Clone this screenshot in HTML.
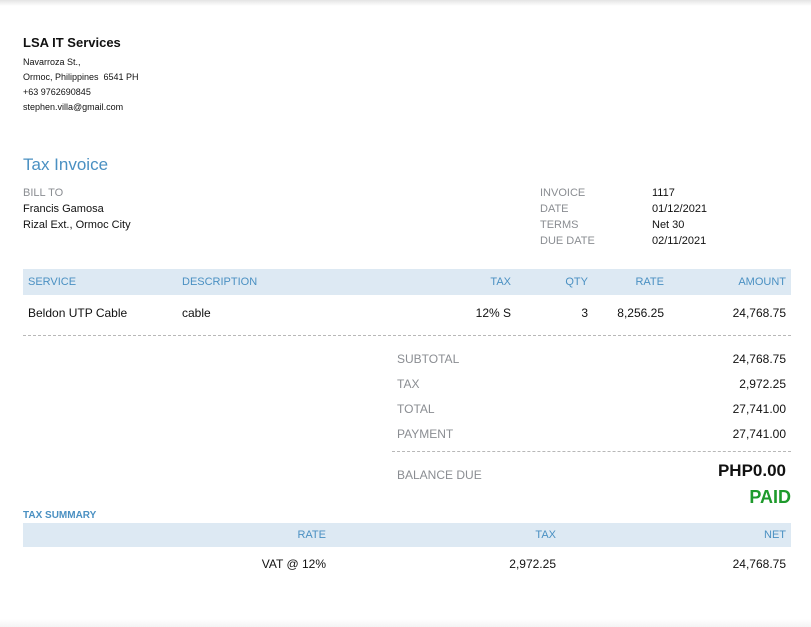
<!DOCTYPE html>
<html><head><meta charset="utf-8"><style>
body{margin:0;width:811px;height:627px;background:#fff;font-family:"Liberation Sans",Arial,sans-serif;position:relative;overflow:hidden;color:#111}
.a{position:absolute;white-space:nowrap}
.s{font-size:9px}
.f{font-size:11px}
.n{font-size:12px}
.g{color:#8a8d92}
.b{color:#4a90c2}
.r{text-align:right}
.band{position:absolute;left:23px;width:768px;background:#dde9f3}
.dash{position:absolute;border-top:1px dashed #b8b8b8;height:0}
</style></head><body>
<div style="position:absolute;left:0;top:0;width:811px;height:6px;background:linear-gradient(#e4e4e4,#fff)"></div>
<div style="position:absolute;left:0;bottom:0;width:811px;height:8px;background:linear-gradient(#fff,#f4f4f4)"></div>

<div class="a" style="left:23px;top:35px;font-size:13px;font-weight:bold">LSA IT Services</div>
<div class="a s" style="left:23px;top:57px">Navarroza St.,</div>
<div class="a s" style="left:23px;top:72px">Ormoc, Philippines&nbsp; 6541 PH</div>
<div class="a s" style="left:23px;top:87px">+63 9762690845</div>
<div class="a s" style="left:23px;top:102px">stephen.villa@gmail.com</div>

<div class="a b" style="left:23px;top:155px;font-size:17px">Tax Invoice</div>
<div class="a f g" style="left:23px;top:187px">BILL TO</div>
<div class="a f" style="left:23px;top:203px">Francis Gamosa</div>
<div class="a f" style="left:23px;top:219px">Rizal Ext., Ormoc City</div>

<div class="a f g" style="left:540px;top:187px">INVOICE</div>
<div class="a f g" style="left:540px;top:203px">DATE</div>
<div class="a f g" style="left:540px;top:219px">TERMS</div>
<div class="a f g" style="left:540px;top:235px">DUE DATE</div>
<div class="a f" style="left:652px;top:187px">1117</div>
<div class="a f" style="left:652px;top:203px">01/12/2021</div>
<div class="a f" style="left:652px;top:219px">Net 30</div>
<div class="a f" style="left:652px;top:235px">02/11/2021</div>

<div class="band" style="top:269px;height:26px"></div>
<div class="a f b" style="left:28px;top:276px">SERVICE</div>
<div class="a f b" style="left:182px;top:276px">DESCRIPTION</div>
<div class="a f b r" style="right:300px;top:276px">TAX</div>
<div class="a f b r" style="right:223px;top:276px">QTY</div>
<div class="a f b r" style="right:147px;top:276px">RATE</div>
<div class="a f b r" style="right:25px;top:276px">AMOUNT</div>

<div class="a n" style="left:28px;top:306px">Beldon UTP Cable</div>
<div class="a n" style="left:182px;top:306px">cable</div>
<div class="a n r" style="right:300px;top:306px">12% S</div>
<div class="a n r" style="right:223px;top:306px">3</div>
<div class="a n r" style="right:147px;top:306px">8,256.25</div>
<div class="a n r" style="right:25px;top:306px">24,768.75</div>
<div class="dash" style="left:23px;width:768px;top:335px"></div>

<div class="a g n" style="left:397px;top:352px">SUBTOTAL</div>
<div class="a g n" style="left:397px;top:377px">TAX</div>
<div class="a g n" style="left:397px;top:402px">TOTAL</div>
<div class="a g n" style="left:397px;top:427px">PAYMENT</div>
<div class="a n r" style="right:25px;top:352px">24,768.75</div>
<div class="a n r" style="right:25px;top:377px">2,972.25</div>
<div class="a n r" style="right:25px;top:402px">27,741.00</div>
<div class="a n r" style="right:25px;top:427px">27,741.00</div>
<div class="dash" style="left:392px;width:399px;top:451px"></div>
<div class="a g n" style="left:397px;top:468px">BALANCE DUE</div>
<div class="a r" style="right:25px;top:461px;font-size:17px;font-weight:bold">PHP0.00</div>
<div class="a r" style="right:20px;top:487px;font-size:18px;font-weight:bold;color:#1e9a2c">PAID</div>

<div class="a b" style="left:23px;top:510px;font-size:10px;font-weight:bold">TAX SUMMARY</div>
<div class="band" style="top:523px;height:24px"></div>
<div class="a f b r" style="right:485px;top:529px">RATE</div>
<div class="a f b r" style="right:255px;top:529px">TAX</div>
<div class="a f b r" style="right:25px;top:529px">NET</div>
<div class="a n r" style="right:485px;top:557px">VAT @ 12%</div>
<div class="a n r" style="right:255px;top:557px">2,972.25</div>
<div class="a n r" style="right:25px;top:557px">24,768.75</div>
</body></html>
